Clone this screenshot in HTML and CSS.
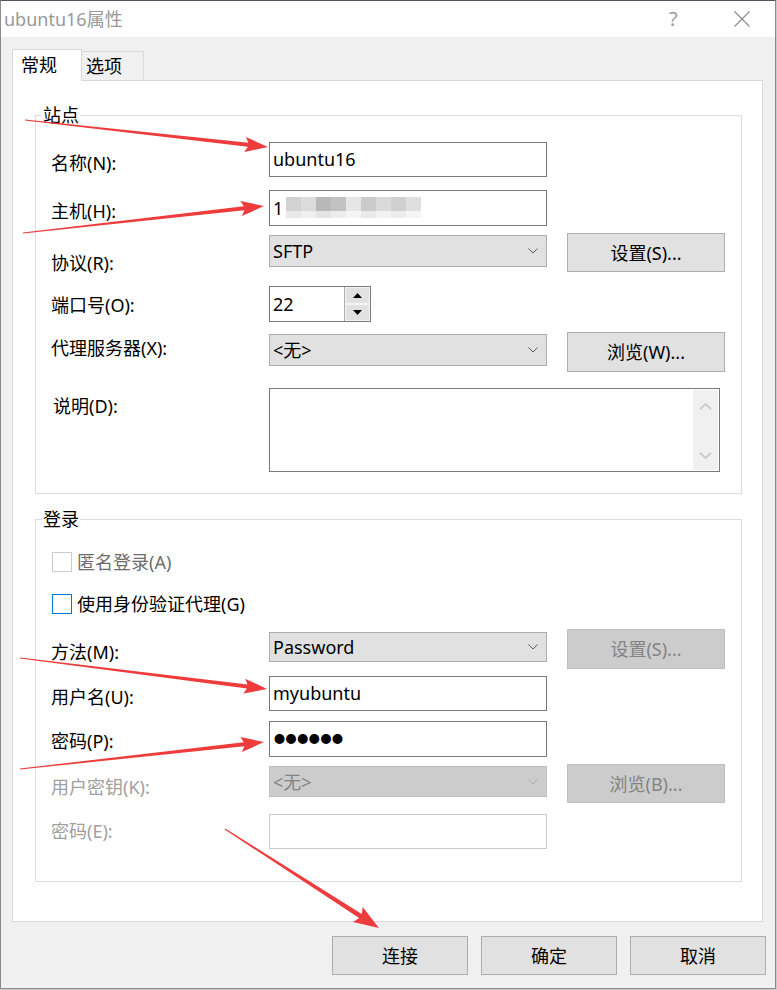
FILE: index.html
```html
<!DOCTYPE html>
<html lang="zh-CN">
<head>
    <meta charset="UTF-8">
    <title>ubuntu16属性</title>
    <link rel="stylesheet" href="styles.css">
</head>
<body>
    <div class="window">
        <div class="titlebar">
            <span class="title">ubuntu16属性</span>
            <span class="help">?</span>
            <svg class="close" width="16" height="16" viewBox="0 0 16 16">
                <path d="M0.5 0.5 L15.5 15.5 M15.5 0.5 L0.5 15.5" stroke="#8a8a8a" stroke-width="1.1" fill="none"/>
            </svg>
        </div>

        <div class="tabs">
            <div class="tab active">常规</div>
            <div class="tab">选项</div>
        </div>

        <div class="page">
            <fieldset class="group group-site">
                <legend>站点</legend>

                <div class="row row-name">
                    <span class="lbl">名称(N):</span>
                    <div class="field">ubuntu16</div>
                </div>
                <div class="row row-host">
                    <span class="lbl">主机(H):</span>
                    <div class="field host">
                        <span>1</span>
                        <span class="mosaic">
                            <i></i><i></i><i></i><i></i><i></i><i></i><i></i><i></i><i></i>
                            <i></i><i></i><i></i><i></i><i></i><i></i><i></i><i></i><i></i>
                        </span>
                    </div>
                </div>
                <div class="row row-proto">
                    <span class="lbl">协议(R):</span>
                    <div class="combo">
                        <span>SFTP</span>
                        <svg class="chev" width="10" height="6" viewBox="0 0 10 6"><path d="M0.5 0.5 L5 5 L9.5 0.5" stroke="#5a5a5a" fill="none"/></svg>
                    </div>
                    <div class="btn">设置(S)...</div>
                </div>
                <div class="row row-port">
                    <span class="lbl">端口号(O):</span>
                    <div class="spin">
                        <span class="spin-val">22</span>
                        <div class="spin-btns">
                            <div class="spin-btn"><svg width="9" height="5" viewBox="0 0 9 5"><path d="M0 5 L4.5 0 L9 5 Z" fill="#000"/></svg></div>
                            <div class="spin-btn"><svg width="9" height="5" viewBox="0 0 9 5"><path d="M0 0 L4.5 5 L9 0 Z" fill="#000"/></svg></div>
                        </div>
                    </div>
                </div>
                <div class="row row-proxy">
                    <span class="lbl">代理服务器(X):</span>
                    <div class="combo">
                        <span>&lt;无&gt;</span>
                        <svg class="chev" width="10" height="6" viewBox="0 0 10 6"><path d="M0.5 0.5 L5 5 L9.5 0.5" stroke="#5a5a5a" fill="none"/></svg>
                    </div>
                    <div class="btn">浏览(W)...</div>
                </div>
                <div class="row row-desc">
                    <span class="lbl">说明(D):</span>
                    <div class="memo">
                        <div class="vscroll">
                            <svg width="13" height="7" viewBox="0 0 13 7"><path d="M1 6.2 L6.5 1 L12 6.2" stroke="#c4c4c4" stroke-width="1.6" fill="none"/></svg>
                            <svg width="13" height="7" viewBox="0 0 13 7"><path d="M1 0.8 L6.5 6 L12 0.8" stroke="#c4c4c4" stroke-width="1.6" fill="none"/></svg>
                        </div>
                    </div>
                </div>
            </fieldset>

            <fieldset class="group group-login">
                <legend>登录</legend>

                <div class="check row-anon off">
                    <span class="box"></span>
                    <span>匿名登录(A)</span>
                </div>
                <div class="check row-agent">
                    <span class="box focus"></span>
                    <span>使用身份验证代理(G)</span>
                </div>
                <div class="row row-method">
                    <span class="lbl">方法(M):</span>
                    <div class="combo">
                        <span>Password</span>
                        <svg class="chev" width="10" height="6" viewBox="0 0 10 6"><path d="M0.5 0.5 L5 5 L9.5 0.5" stroke="#5a5a5a" fill="none"/></svg>
                    </div>
                    <div class="btn off">设置(S)...</div>
                </div>
                <div class="row row-user">
                    <span class="lbl">用户名(U):</span>
                    <div class="field">myubuntu</div>
                </div>
                <div class="row row-pass">
                    <span class="lbl">密码(P):</span>
                    <div class="field secret">●●●●●●</div>
                </div>
                <div class="row row-key">
                    <span class="lbl off">用户密钥(K):</span>
                    <div class="combo off">
                        <span>&lt;无&gt;</span>
                        <svg class="chev" width="10" height="6" viewBox="0 0 10 6"><path d="M0.5 0.5 L5 5 L9.5 0.5" stroke="#adadad" fill="none"/></svg>
                    </div>
                    <div class="btn off">浏览(B)...</div>
                </div>
                <div class="row row-pass2">
                    <span class="lbl off">密码(E):</span>
                    <div class="field off"></div>
                </div>
            </fieldset>
        </div>

        <div class="actions">
            <div class="btn">连接</div>
            <div class="btn">确定</div>
            <div class="btn">取消</div>
        </div>
    </div>

    <!-- red annotation arrows drawn over the dialog -->
    <svg class="marks" width="777" height="990" viewBox="0 0 777 990">
        <g fill="#ee3b3b">
            <polygon transform="translate(25 120) rotate(6.34)" points="0,-0.5 224.5,-2 221.5,-7.5 244.5,0 221.5,7.5 224.5,2 0,0.5"/>
            <polygon transform="translate(23 233) rotate(-6.39)" points="0,-0.5 222.5,-2 219.5,-7.5 242.5,0 219.5,7.5 222.5,2 0,0.5"/>
            <polygon transform="translate(20 658) rotate(7.15)" points="0,-0.5 229,-2 226,-7.5 249,0 226,7.5 229,2 0,0.5"/>
            <polygon transform="translate(20 769) rotate(-6.31)" points="0,-0.5 225.5,-2 222.5,-7.5 245.5,0 222.5,7.5 225.5,2 0,0.5"/>
            <polygon transform="translate(225 829) rotate(32.74)" points="0,-0.6 161,-2.4 158,-9 183,0 158,9 161,2.4 0,0.6"/>
        </g>
    </svg>
</body>
</html>
```

FILE: styles.css
```css
* {
    margin: 0;
    padding: 0;
    box-sizing: border-box;
}

body {
    width: 777px;
    height: 990px;
    overflow: hidden;
    position: relative;
    background: #c9c9c9;
    font-family: "Noto Sans", "Noto Sans CJK SC", sans-serif;
    font-size: 18px;
    line-height: 24px;
    color: #000;
}

.window {
    width: 776px;
    height: 989px;
    background: #f0f0f0;
    border: 1px solid #8c8c8c;
    border-top-color: #4b5563;
    display: flex;
    flex-direction: column;
}

/* title bar */
.titlebar {
    height: 36px;
    background: #fff;
    display: flex;
    align-items: center;
}

.title {
    flex: 1;
    padding-left: 3px;
    color: #999;
}

.help {
    width: 12px;
    margin-right: 53px;
    font-size: 20px;
    color: #9a9a9a;
}

.close {
    margin-right: 25px;
}

/* tabs */
.tabs {
    display: flex;
    align-items: flex-end;
    height: 31px;
    margin: 12px 0 0 11px;
}

.tab {
    width: 62px;
    height: 29px;
    padding-left: 4px;
    line-height: 28px;
    border: 1px solid #d9d9d9;
    border-left: none;
    border-bottom: none;
}

.tab.active {
    width: 70px;
    height: 32px;
    padding-left: 8px;
    line-height: 31px;
    margin-bottom: -1px;
    background: #fff;
    border-left: 1px solid #d9d9d9;
    position: relative;
    z-index: 1;
}

.page {
    width: 751px;
    height: 842px;
    margin-left: 11px;
    padding: 22px 0 0 22px;
    background: #fff;
    border: 1px solid #d9d9d9;
}

/* group boxes */
.group {
    width: 707px;
    border: 1px solid #dcdcdc;
    padding: 15px 16px 21px 15px;
}

.group legend {
    margin-left: -9px;
    padding: 0 1px;
    line-height: 24px;
}

.group-login {
    margin-top: 13px;
    padding-top: 21px;
    padding-bottom: 32px;
}

.row {
    display: grid;
    grid-template-columns: 218px 278px 20px 158px;
    align-items: start;
}

.row .btn {
    grid-column: 4;
}

.lbl.off {
    color: #a0a0a0;
}

/* controls */
.field {
    height: 35px;
    padding-left: 3px;
    line-height: 33px;
    background: #fff;
    border: 1px solid #7a7a7a;
}

.field.off {
    border-color: #cccccc;
}

.field.secret {
    font-family: "Noto Sans CJK SC", sans-serif;
    font-size: 11px;
    letter-spacing: 0.6px;
    padding-left: 4px;
}

.host {
    display: flex;
    align-items: center;
}

.mosaic {
    display: grid;
    grid-template-columns: repeat(9, 15px);
    grid-template-rows: 14px 7px;
    margin: -2px 0 0 3px;
}

.mosaic i:nth-child(1) { background: #d2d2d2; }
.mosaic i:nth-child(2) { background: #dcdcdc; }
.mosaic i:nth-child(3) { background: #b8b8b8; }
.mosaic i:nth-child(4) { background: #c2c2c2; }
.mosaic i:nth-child(5) { background: #e6e6e6; }
.mosaic i:nth-child(6) { background: #cbcbcb; }
.mosaic i:nth-child(7) { background: #dadada; }
.mosaic i:nth-child(8) { background: #d0d0d0; }
.mosaic i:nth-child(9) { background: #dfdfdf; }
.mosaic i:nth-child(10) { background: #e8e8e8; }
.mosaic i:nth-child(11) { background: #f0f0f0; }
.mosaic i:nth-child(12) { background: #e4e4e4; }
.mosaic i:nth-child(13) { background: #ececec; }
.mosaic i:nth-child(14) { background: #f4f4f4; }
.mosaic i:nth-child(15) { background: #eaeaea; }
.mosaic i:nth-child(16) { background: #f2f2f2; }
.mosaic i:nth-child(17) { background: #ededed; }
.mosaic i:nth-child(18) { background: #f5f5f5; }

.combo {
    height: 32px;
    margin-top: 2px;
    padding-left: 3px;
    display: flex;
    align-items: center;
    justify-content: space-between;
    background: #e1e1e1;
    border: 1px solid #adadad;
}

.combo .chev {
    margin-right: 8px;
}

.combo.off {
    background: #cccccc;
    border-color: #bfbfbf;
    color: #838383;
}

.btn {
    height: 39px;
    display: flex;
    align-items: center;
    justify-content: center;
    background: #e1e1e1;
    border: 1px solid #adadad;
}

.btn.off {
    background: #cccccc;
    border-color: #bfbfbf;
    color: #838383;
}

.spin {
    width: 102px;
    height: 36px;
    display: flex;
    background: #fff;
    border: 1px solid #7a7a7a;
}

.spin-val {
    flex: 1;
    padding-left: 3px;
    line-height: 34px;
}

.spin-btns {
    width: 26px;
    display: flex;
    flex-direction: column;
    border-left: 1px solid #adadad;
}

.spin-btn {
    flex: 1;
    display: flex;
    align-items: center;
    justify-content: center;
    background: #e1e1e1;
    border: 1px solid #f4f4f4;
}

.memo {
    grid-column: 2 / 5;
    width: 451px;
    height: 84px;
    padding: 1px;
    display: flex;
    justify-content: flex-end;
    background: #fff;
    border: 1px solid #7a7a7a;
}

.vscroll {
    width: 25px;
    padding: 13px 0 11px;
    display: flex;
    flex-direction: column;
    justify-content: space-between;
    align-items: center;
    background: #f0f0f0;
}

/* row spacing, site group */
.row-name { height: 35px; }
.row-name .lbl { margin-top: 9px; }

.row-host { height: 36px; margin-top: 13px; }
.row-host .field { height: 36px; }
.row-host .lbl { margin-top: 9px; }

.row-proto { height: 39px; margin-top: 7px; }
.row-proto .lbl { margin-top: 18px; }

.row-port { height: 36px; margin-top: 14px; }
.row-port .lbl { margin-top: 7px; }

.row-proxy { height: 40px; margin-top: 10px; }
.row-proxy .btn { height: 40px; }
.row-proxy .lbl { margin-top: 4px; }

.row-desc { height: 84px; margin-top: 16px; }
.row-desc .lbl { margin: 6px 0 0 2px; }

/* row spacing, login group */
.check {
    height: 20px;
    display: flex;
    align-items: center;
    gap: 5px;
}

.check .box {
    width: 20px;
    height: 20px;
    margin-left: 1px;
    background: #fff;
    border: 1px solid #333;
}

.check.off {
    color: #6d6d6d;
}

.check.off .box {
    border-color: #cccccc;
}

.check .box.focus {
    border-color: #0078d7;
}

.row-agent { margin-top: 22px; }

.row-method { height: 40px; margin-top: 15px; }
.row-method .combo { height: 30px; margin-top: 3px; }
.row-method .btn { height: 40px; }
.row-method .lbl { margin-top: 11px; }

.row-user { height: 35px; margin-top: 7px; }
.row-user .lbl { margin-top: 9px; }

.row-pass { height: 36px; margin-top: 10px; }
.row-pass .field { height: 36px; }
.row-pass .lbl { margin-top: 8px; }

.row-key { height: 39px; margin-top: 7px; }
.row-key .combo { height: 31px; }
.row-key .lbl { margin-top: 11px; }

.row-pass2 { height: 35px; margin-top: 11px; }
.row-pass2 .lbl { margin-top: 5px; }

/* dialog buttons */
.actions {
    display: flex;
    justify-content: flex-end;
    gap: 13px;
    margin-top: 14px;
    padding-right: 9px;
}

.actions .btn {
    width: 136px;
}

.marks {
    position: absolute;
    top: 0;
    left: 0;
    pointer-events: none;
}
```
